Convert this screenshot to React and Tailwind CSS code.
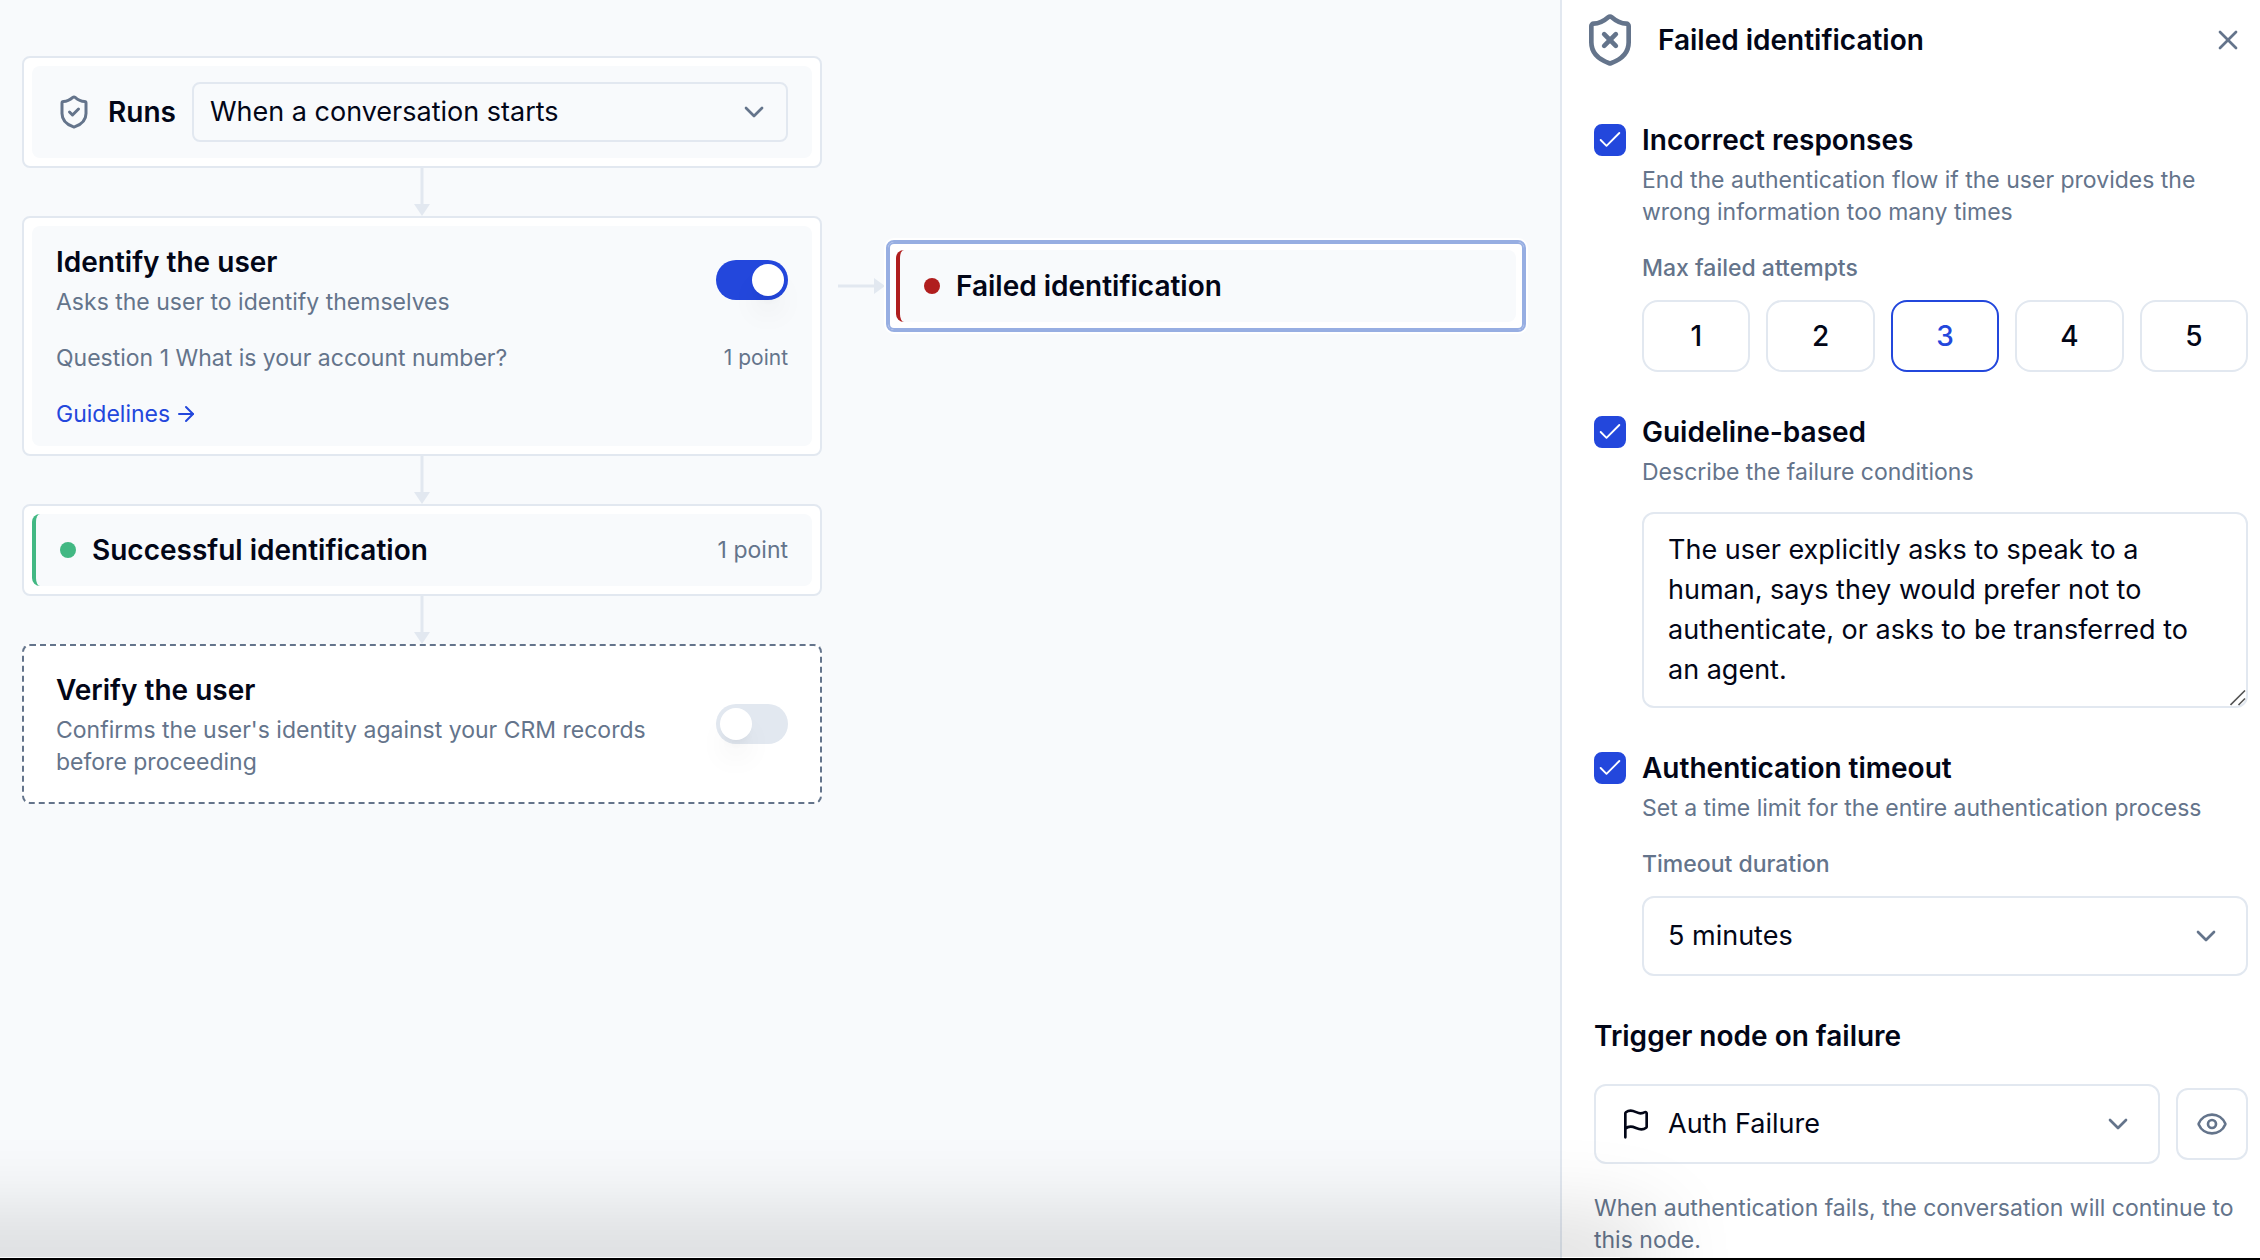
import { ShieldCheck, ShieldX, X, Check, ChevronDown, Flag, Eye, ArrowRight } from "lucide-react";

function Card({ children, className = "border-solid border-[#e2e8f0]", inner = "bg-[#f8fafc]" }) {
  return (
    <section className={`rounded-lg border-2 bg-white p-2 ${className}`}>
      <div className={`rounded-lg px-6 py-4 ${inner}`}>{children}</div>
    </section>
  );
}

function DownArrow() {
  return (
    <svg className="mx-auto block h-12 w-4" viewBox="0 0 16 48" aria-hidden="true">
      <path d="M8 0V38" stroke="#e2e8f0" strokeWidth="3" />
      <path d="M0 36H16L8 48Z" fill="#e2e8f0" />
    </svg>
  );
}

function Toggle({ label, on }) {
  return (
    <span className="relative block h-10 w-[72px] shrink-0">
      <input type="checkbox" role="switch" aria-label={label} defaultChecked={on} className="peer block h-10 w-[72px] appearance-none rounded-full bg-[#e2e8f0] checked:bg-[#2347dc]" />
      <span className="pointer-events-none absolute left-1 top-1 size-8 rounded-full bg-white shadow-[0_20px_30px_-6px_rgba(0,0,0,0.1),0_8px_12px_-8px_rgba(0,0,0,0.1)] peer-checked:left-9" />
    </span>
  );
}

function CheckSection({ id, title, description, children }) {
  return (
    <section className="grid grid-cols-[32px_1fr] gap-x-4">
      <span className="relative mt-1 block size-8">
        <input id={id} type="checkbox" defaultChecked className="peer block size-8 appearance-none rounded-lg border-2 border-[#2347dc] checked:bg-[#2347dc]" />
        <Check className="pointer-events-none absolute left-0.5 top-0.5 hidden size-7 text-white peer-checked:block" strokeWidth={1.6} />
      </span>
      <div className="min-w-0">
        <label htmlFor={id} className="block text-[28px] leading-10 font-semibold">{title}</label>
        <p className="mt-1 text-[23px] leading-8 text-[#64748b]">{description}</p>
        {children}
      </div>
    </section>
  );
}

export default function App() {
  return (
    <div className="relative flex min-h-screen overflow-hidden border-b-2 border-black bg-[#f8fafc] font-['Inter',sans-serif] text-[28px] leading-10 text-[#020617]">
      <main className="flex min-w-0 flex-1 items-start pl-[22px] pt-14">
        <div className="w-[800px] shrink-0">
          <Card>
            <div className="flex items-center gap-4">
              <ShieldCheck className="size-9 shrink-0 text-[#64748b]" strokeWidth={2} />
              <label htmlFor="runs" className="font-semibold">Runs</label>
              <div className="relative flex-1">
                <select id="runs" className="block h-[60px] w-full appearance-none rounded-lg border-2 border-[#e2e8f0] bg-transparent px-4 text-[27px]">
                  <option>When a conversation starts</option>
                </select>
                <ChevronDown className="pointer-events-none absolute right-[18px] top-[14px] size-8 text-[#64748b]" />
              </div>
            </div>
          </Card>
          <DownArrow />
          <Card>
            <div className="flex items-center justify-between">
              <div>
                <h2 className="font-semibold">Identify the user</h2>
                <p className="mt-1 text-[23px] leading-8 text-[#64748b]">Asks the user to identify themselves</p>
              </div>
              <Toggle label="Identify the user" on />
            </div>
            <div className="mt-6 flex justify-between text-[23px] leading-8 text-[#64748b]">
              <p>Question 1 What is your account number?</p>
              <p className="text-[21px]">1 point</p>
            </div>
            <a href="#guidelines" className="mt-6 flex items-center gap-1 text-[23px] leading-8 text-[#2347dc]">
              Guidelines <ArrowRight className="size-6" />
            </a>
          </Card>
          <DownArrow />
          <Card inner="border-l-4 border-[#42b883] bg-[#f8fafc]">
            <div className="flex items-center gap-4">
              <span className="size-4 rounded-full bg-[#42b883]" />
              <h2 className="flex-1 font-semibold">Successful identification</h2>
              <p className="text-[23px] leading-8 text-[#64748b]">1 point</p>
            </div>
          </Card>
          <DownArrow />
          <Card className="border-dashed border-[#64748b]" inner="bg-white">
            <div className="flex items-center justify-between">
              <div>
                <h2 className="font-semibold">Verify the user</h2>
                <p className="mt-1 w-[620px] text-[23px] leading-8 text-[#64748b]">Confirms the user's identity against your CRM records before proceeding</p>
              </div>
              <Toggle label="Verify the user" />
            </div>
          </Card>
        </div>

        <div className="mt-[184px] flex items-center">
          <svg className="ml-4 h-4 w-12" viewBox="0 0 48 16" aria-hidden="true">
            <path d="M0 8H38" stroke="#e2e8f0" strokeWidth="3" />
            <path d="M36 0V16L47 8Z" fill="#e2e8f0" />
          </svg>
          <div className="w-[640px] shrink-0">
            <Card className="border-[#97aee2] shadow-[inset_0_0_0_2px_#97aee2,0_0_0_2px_#ffffff]" inner="border-l-4 border-[#b01e1e] bg-[#f8fafc]">
              <div className="flex items-center gap-4">
                <span className="size-4 rounded-full bg-[#b01e1e]" />
                <h2 className="font-semibold">Failed identification</h2>
              </div>
            </Card>
          </div>
        </div>
      </main>

      <aside className="w-[700px] shrink-0 border-l-2 border-[#e2e8f0] bg-white pr-3 pl-8">
        <header className="-ml-3 flex h-20 items-center">
          <ShieldX className="size-14 text-[#64748b]" strokeWidth={2} />
          <h1 className="ml-5 flex-1 font-semibold">Failed identification</h1>
          <button type="button" aria-label="Close" className="flex size-10 items-center justify-center text-[#64748b]">
            <X className="size-8" strokeWidth={2} />
          </button>
        </header>

        <div className="mt-10 flex flex-col gap-10">
          <CheckSection id="incorrect" title="Incorrect responses" description="End the authentication flow if the user provides the wrong information too many times">
            <p className="mt-6 text-[23px] leading-8 font-medium text-[#64748b]">Max failed attempts</p>
            <div className="mt-4 grid grid-cols-5 gap-4">
              {[1, 2, 3, 4, 5].map((n) => (
                <button key={n} type="button" aria-pressed={n === 3} className={`h-[72px] rounded-2xl border-2 font-medium ${n === 3 ? "border-[#2347dc] text-[#2347dc]" : "border-[#e2e8f0]"}`}>
                  {n}
                </button>
              ))}
            </div>
          </CheckSection>

          <CheckSection id="guideline" title="Guideline-based" description="Describe the failure conditions">
            <div className="relative mt-6">
              <textarea
                aria-label="Failure conditions"
                rows={4}
                className="block w-full resize-none rounded-xl border-2 border-[#e2e8f0] px-6 py-4 text-[27px]"
                defaultValue="The user explicitly asks to speak to a human, says they would prefer not to authenticate, or asks to be transferred to an agent."
              />
              <svg className="pointer-events-none absolute right-0.5 bottom-0.5 size-4" viewBox="0 0 16 16" stroke="#555" strokeWidth="1.6" aria-hidden="true">
                <path d="M0.5 15L15 0.5M8.5 15L15 8.5" />
              </svg>
            </div>
          </CheckSection>

          <CheckSection id="timeout" title="Authentication timeout" description="Set a time limit for the entire authentication process">
            <label htmlFor="duration" className="mt-6 block text-[23px] leading-8 font-medium text-[#64748b]">Timeout duration</label>
            <div className="relative mt-4">
              <select id="duration" className="block h-20 w-full appearance-none rounded-xl border-2 border-[#e2e8f0] bg-transparent px-6 text-[27px]">
                <option>5 minutes</option>
              </select>
              <ChevronDown className="pointer-events-none absolute right-[26px] top-6 size-8 text-[#64748b]" />
            </div>
          </CheckSection>

          <section>
            <label htmlFor="trigger" className="block font-semibold">Trigger node on failure</label>
            <div className="mt-7 flex items-center gap-4">
              <div className="relative flex-1">
                <Flag className="pointer-events-none absolute left-[26px] top-6 size-8" />
                <select id="trigger" className="block h-20 w-full appearance-none rounded-xl border-2 border-[#e2e8f0] bg-transparent pr-6 pl-[72px] text-[27px]">
                  <option>Auth Failure</option>
                </select>
                <ChevronDown className="pointer-events-none absolute right-[26px] top-6 size-8 text-[#64748b]" />
              </div>
              <button type="button" aria-label="Preview node" className="flex size-[72px] items-center justify-center rounded-xl border-2 border-[#e2e8f0] text-[#64748b]">
                <Eye className="size-8" />
              </button>
            </div>
            <p className="mt-7 text-[23px] leading-8 text-[#64748b]">When authentication fails, the conversation will continue to this node.</p>
          </section>
        </div>
      </aside>

      <div className="pointer-events-none absolute -left-40 right-[640px] bottom-0 h-px shadow-[0_0_90px_30px_rgba(0,0,0,0.19)]" />
    </div>
  );
}
